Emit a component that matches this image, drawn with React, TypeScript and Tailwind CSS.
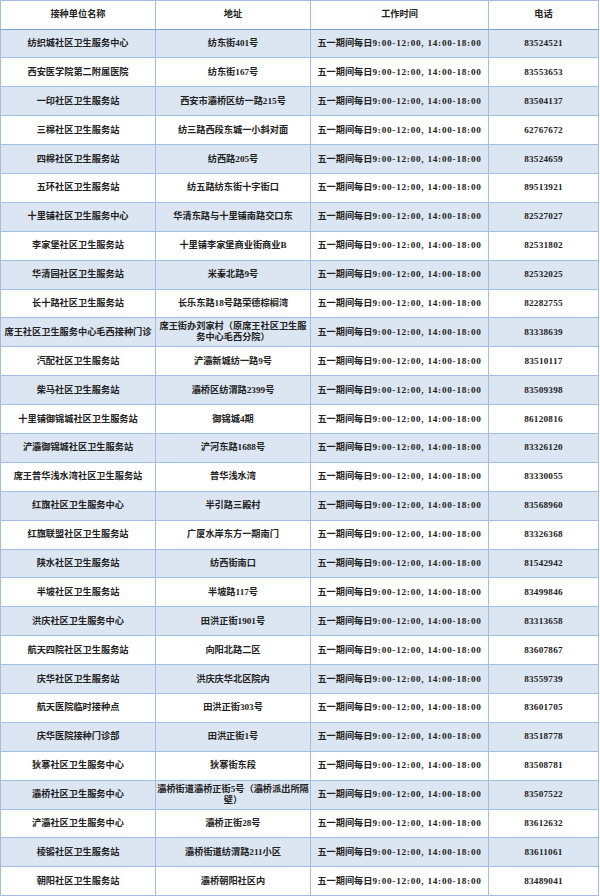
import React from "react";

type Row = [string, string, string];

const rows: Row[] = [
  ["纺织城社区卫生服务中心", "纺东街401号", "83524521"],
  ["西安医学院第二附属医院", "纺东街167号", "83553653"],
  ["一印社区卫生服务站", "西安市灞桥区纺一路215号", "83504137"],
  ["三棉社区卫生服务站", "纺三路西段东城一小斜对面", "62767672"],
  ["四棉社区卫生服务站", "纺西路205号", "83524659"],
  ["五环社区卫生服务站", "纺五路纺东街十字街口", "89513921"],
  ["十里铺社区卫生服务中心", "华清东路与十里铺南路交口东", "82527027"],
  ["李家堡社区卫生服务站", "十里铺李家堡商业街商业B", "82531802"],
  ["华清园社区卫生服务站", "米秦北路9号", "82532025"],
  ["长十路社区卫生服务站", "长乐东路18号路荣德棕榈湾", "82282755"],
  ["席王社区卫生服务中心毛西接种门诊", "席王街办刘家村（原席王社区卫生服\n务中心毛西分院）", "83338639"],
  ["汽配社区卫生服务站", "浐灞新城纺一路9号", "83510117"],
  ["柴马社区卫生服务站", "灞桥区纺渭路2399号", "83509398"],
  ["十里铺御锦城社区卫生服务站", "御锦城4期", "86120816"],
  ["浐灞御锦城社区卫生服务站", "浐河东路1688号", "83326120"],
  ["席王普华浅水湾社区卫生服务站", "普华浅水湾", "83330055"],
  ["红旗社区卫生服务中心", "半引路三殿村", "83568960"],
  ["红旗联盟社区卫生服务站", "广厦水岸东方一期南门", "83326368"],
  ["陕水社区卫生服务站", "纺西街南口", "81542942"],
  ["半坡社区卫生服务站", "半坡路117号", "83499846"],
  ["洪庆社区卫生服务中心", "田洪正街1901号", "83313658"],
  ["航天四院社区卫生服务站", "向阳北路二区", "83607867"],
  ["庆华社区卫生服务站", "洪庆庆华北区院内", "83559739"],
  ["航天医院临时接种点", "田洪正街303号", "83601705"],
  ["庆华医院接种门诊部", "田洪正街1号", "83518778"],
  ["狄寨社区卫生服务中心", "狄寨街东段", "83508781"],
  ["灞桥社区卫生服务中心", "灞桥街道灞桥正街5号（灞桥派出所隔\n壁）", "83507522"],
  ["浐灞社区卫生服务中心", "灞桥正街28号", "83612632"],
  ["棱锻社区卫生服务站", "灞桥街道纺渭路211小区", "83611061"],
  ["朝阳社区卫生服务站", "灞桥朝阳社区内", "83489041"],
];

const cell =
  "border border-[#a3bde0] text-center align-middle p-0 overflow-hidden";

const Hours: React.FC = () => (
  <>
    <span>五一期间每日</span>
    <span className="tracking-[0.75px]">9:00-12:00, 14:00-18:00</span>
  </>
);

const App: React.FC = () => {
  return (
    <div
      className="w-[600px] h-[896px] overflow-hidden bg-white text-[#222] font-bold text-[9.2px] leading-[11px]"
      style={{ fontFamily: '"Liberation Serif", "Noto Sans CJK SC", serif' }}
    >
      <table className="table-fixed border-collapse w-[598px]">
        <colgroup>
          <col className="w-[155px]" />
          <col className="w-[155px]" />
          <col className="w-[178px]" />
          <col className="w-[110px]" />
        </colgroup>
        <thead>
          <tr className="h-[28.5px] bg-white">
            <th className={`${cell} border-b-[#7d9fd2] font-bold`}>接种单位名称</th>
            <th className={`${cell} border-b-[#7d9fd2] font-bold`}>地址</th>
            <th className={`${cell} border-b-[#7d9fd2] font-bold`}>工作时间</th>
            <th className={`${cell} border-b-[#7d9fd2] font-bold`}>电话</th>
          </tr>
        </thead>
        <tbody>
          {rows.map(([name, addr, phone], i) => (
            <tr
              key={name}
              className={`h-[28.9px] ${i % 2 === 0 ? "bg-[#dce6f2]" : "bg-white"}`}
            >
              <td className={`${cell} whitespace-nowrap`}>{name}</td>
              <td className={`${cell} whitespace-pre`}>{addr}</td>
              <td className={`${cell} whitespace-nowrap`}>
                <Hours />
              </td>
              <td className={`${cell} tracking-[0.25px]`}>{phone}</td>
            </tr>
          ))}
        </tbody>
      </table>
    </div>
  );
};

export default App;
